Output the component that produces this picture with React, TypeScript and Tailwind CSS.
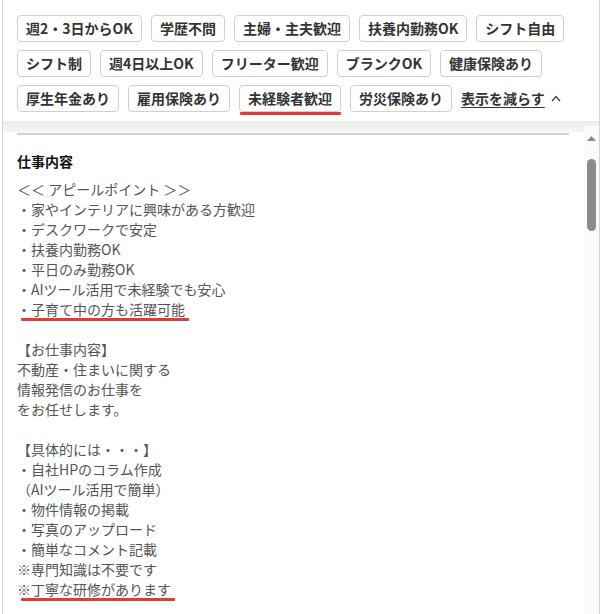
import React from 'react';

const tags: { label: string; marked?: boolean }[] = [
  { label: '週2・3日からOK' },
  { label: '学歴不問' },
  { label: '主婦・主夫歓迎' },
  { label: '扶養内勤務OK' },
  { label: 'シフト自由' },
  { label: 'シフト制' },
  { label: '週4日以上OK' },
  { label: 'フリーター歓迎' },
  { label: 'ブランクOK' },
  { label: '健康保険あり' },
  { label: '厚生年金あり' },
  { label: '雇用保険あり' },
  { label: '未経験者歓迎', marked: true },
  { label: '労災保険あり' },
];

// 本文（空行は '' で表す）
const lines: { text: string; marked?: boolean }[] = [
  { text: '＜＜ アピールポイント ＞＞' },
  { text: '・家やインテリアに興味がある方歓迎' },
  { text: '・デスクワークで安定' },
  { text: '・扶養内勤務OK' },
  { text: '・平日のみ勤務OK' },
  { text: '・AIツール活用で未経験でも安心' },
  { text: '・子育て中の方も活躍可能', marked: true },
  { text: '' },
  { text: '【お仕事内容】' },
  { text: '不動産・住まいに関する' },
  { text: '情報発信のお仕事を' },
  { text: 'をお任せします。' },
  { text: '' },
  { text: '【具体的には・・・】' },
  { text: '・自社HPのコラム作成' },
  { text: '（AIツール活用で簡単）' },
  { text: '・物件情報の掲載' },
  { text: '・写真のアップロード' },
  { text: '・簡単なコメント記載' },
  { text: '※専門知識は不要です' },
  { text: '※丁寧な研修があります', marked: true },
];

export default function App() {
  return (
    <div className="w-[609px] h-[614px] bg-white overflow-hidden font-['Noto_Sans_CJK_JP','Noto_Sans',sans-serif]">
      <div className="ml-[2px] w-[598px] h-[614px] border-x border-[#d4d4d4] flex flex-col">
        {/* タグ一覧 */}
        <div className="h-[121px] pl-[14px] pr-2 pt-[15px] flex flex-wrap content-start gap-x-[9px] gap-y-[8px]">
          {tags.map((t) => (
            <div key={t.label} className="relative">
              <span className="block h-[27px] px-[8px] border border-[#d0d0d0] rounded-[4px] text-[14px] leading-[25px] font-bold text-[#333]">
                {t.label}
              </span>
              {t.marked && <span className="absolute left-[1px] right-0 bottom-[-3px] h-[3px] bg-[#e53935] rounded-[1px]" />}
            </div>
          ))}
          <button className="flex items-center gap-[6px] h-[27px] text-[14px] font-bold text-[#333]">
            <span className="underline underline-offset-[3px] decoration-[1px]">表示を減らす</span>
            <svg width="10" height="7" viewBox="0 0 10 7" fill="none" stroke="#444" strokeWidth="1.4">
              <polyline points="1,6 5,1.5 9,6" />
            </svg>
          </button>
        </div>

        {/* 影の帯 */}
        <div className="h-[11px] bg-gradient-to-b from-[#ebebeb] to-[#f6f6f6]" />

        <div className="flex-1 flex min-h-0">
          <div className="flex-1 pl-[14px] pr-[15px]">
            <div className="h-[2px] mt-[1px] bg-[#d2d2d2]" />
            <h2 className="mt-[16px] text-[14px] leading-[20px] font-bold text-[#111]">仕事内容</h2>
            <div className="mt-[8px] text-[14px] leading-[20px] text-[#555]">
              {lines.map((l, i) => (
                <div key={i} className="h-[20px] whitespace-pre">
                  {l.marked ? (
                    <span className="relative inline-block">
                      {l.text}
                      <span className="absolute left-[4px] right-[-4px] bottom-[-2px] h-[3px] bg-[#e53935] rounded-[1px]" />
                    </span>
                  ) : (
                    l.text
                  )}
                </div>
              ))}
            </div>
          </div>

          {/* スクロールバー */}
          <div className="w-[15px] mt-[-6px] bg-[#fafafa] flex flex-col items-center">
            <svg className="mt-[10px]" width="9" height="5" viewBox="0 0 9 5">
              <polygon points="0,5 4.5,0 9,5" fill="#8a8a8a" />
            </svg>
            <div className="mt-[18px] w-[9px] h-[72px] rounded-full bg-[#8c8c8c]" />
          </div>
        </div>
      </div>
    </div>
  );
}
